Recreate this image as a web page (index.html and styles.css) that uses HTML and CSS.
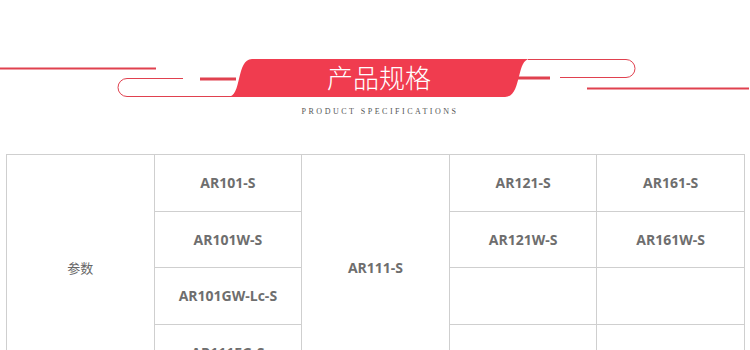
FILE: index.html
```html
<!DOCTYPE html>
<html lang="zh">
<head>
<meta charset="utf-8">
<link rel="stylesheet" href="styles.css">
</head>
<body>
<header class="banner">
  <svg class="banner-art" width="750" height="154" viewBox="0 0 750 154">
    <g fill="none" stroke="#e0414f">
      <line x1="0" y1="68.5" x2="156" y2="68.5" stroke-width="2"/>
      <line x1="587" y1="88.5" x2="749" y2="88.5" stroke-width="2"/>
      <path d="M183 78.5 L127 78.5 A9 9 0 0 0 127 96.5 L232 96.5" stroke-width="1"/>
      <path d="M528 59.5 L626 59.5 A9 9 0 0 1 626 77.5 L560 77.5" stroke-width="1"/>
      <line x1="200" y1="79" x2="236" y2="79" stroke-width="3"/>
      <line x1="516" y1="78" x2="550" y2="78" stroke-width="3"/>
    </g>
    <path d="M228 97 C242 97 236 59 252 59 L530 59 C516 59 522 97 505 97 Z" fill="#f03c4f"/>
    <text x="379" y="88" class="title" text-anchor="middle">产品规格</text>
    <text x="380" y="114" class="subtitle" text-anchor="middle">PRODUCT SPECIFICATIONS</text>
  </svg>
</header>
<table class="spec">
  <tr>
    <td class="label" rowspan="4">参数</td>
    <td>AR101-S</td>
    <td rowspan="4">AR111-S</td>
    <td>AR121-S</td>
    <td>AR161-S</td>
  </tr>
  <tr>
    <td>AR101W-S</td>
    <td>AR121W-S</td>
    <td>AR161W-S</td>
  </tr>
  <tr>
    <td>AR101GW-Lc-S</td>
    <td></td>
    <td></td>
  </tr>
  <tr>
    <td>AR111EG-S</td>
    <td></td>
    <td></td>
  </tr>
</table>
</body>
</html>
```
FILE: styles.css
```css
html, body {
  margin: 0;
  padding: 0;
  background: #fff;
}
body {
  width: 750px;
  height: 350px;
  overflow: hidden;
  font-family: "Open Sans", "Noto Sans CJK SC", sans-serif;
}
.banner {
  height: 154px;
}
.banner-art {
  display: block;
}
.title {
  font-family: "Noto Sans CJK SC", sans-serif;
  font-size: 26px;
  font-weight: 300;
  fill: #ffffff;
}
.subtitle {
  font-family: "Liberation Serif", serif;
  font-size: 8px;
  letter-spacing: 2.5px;
  fill: #555;
}
.spec {
  margin-left: 6px;
  border-collapse: collapse;
  table-layout: fixed;
  width: 739px;
}
.spec td {
  height: 55.6px;
  padding: 0;
  border: 1px solid #cfcfcf;
  text-align: center;
  vertical-align: middle;
  color: #6e6e6e;
  font-size: 14px;
  font-weight: 700;
}
.spec td.label {
  font-weight: 400;
  font-size: 13px;
  color: #666;
}
```
